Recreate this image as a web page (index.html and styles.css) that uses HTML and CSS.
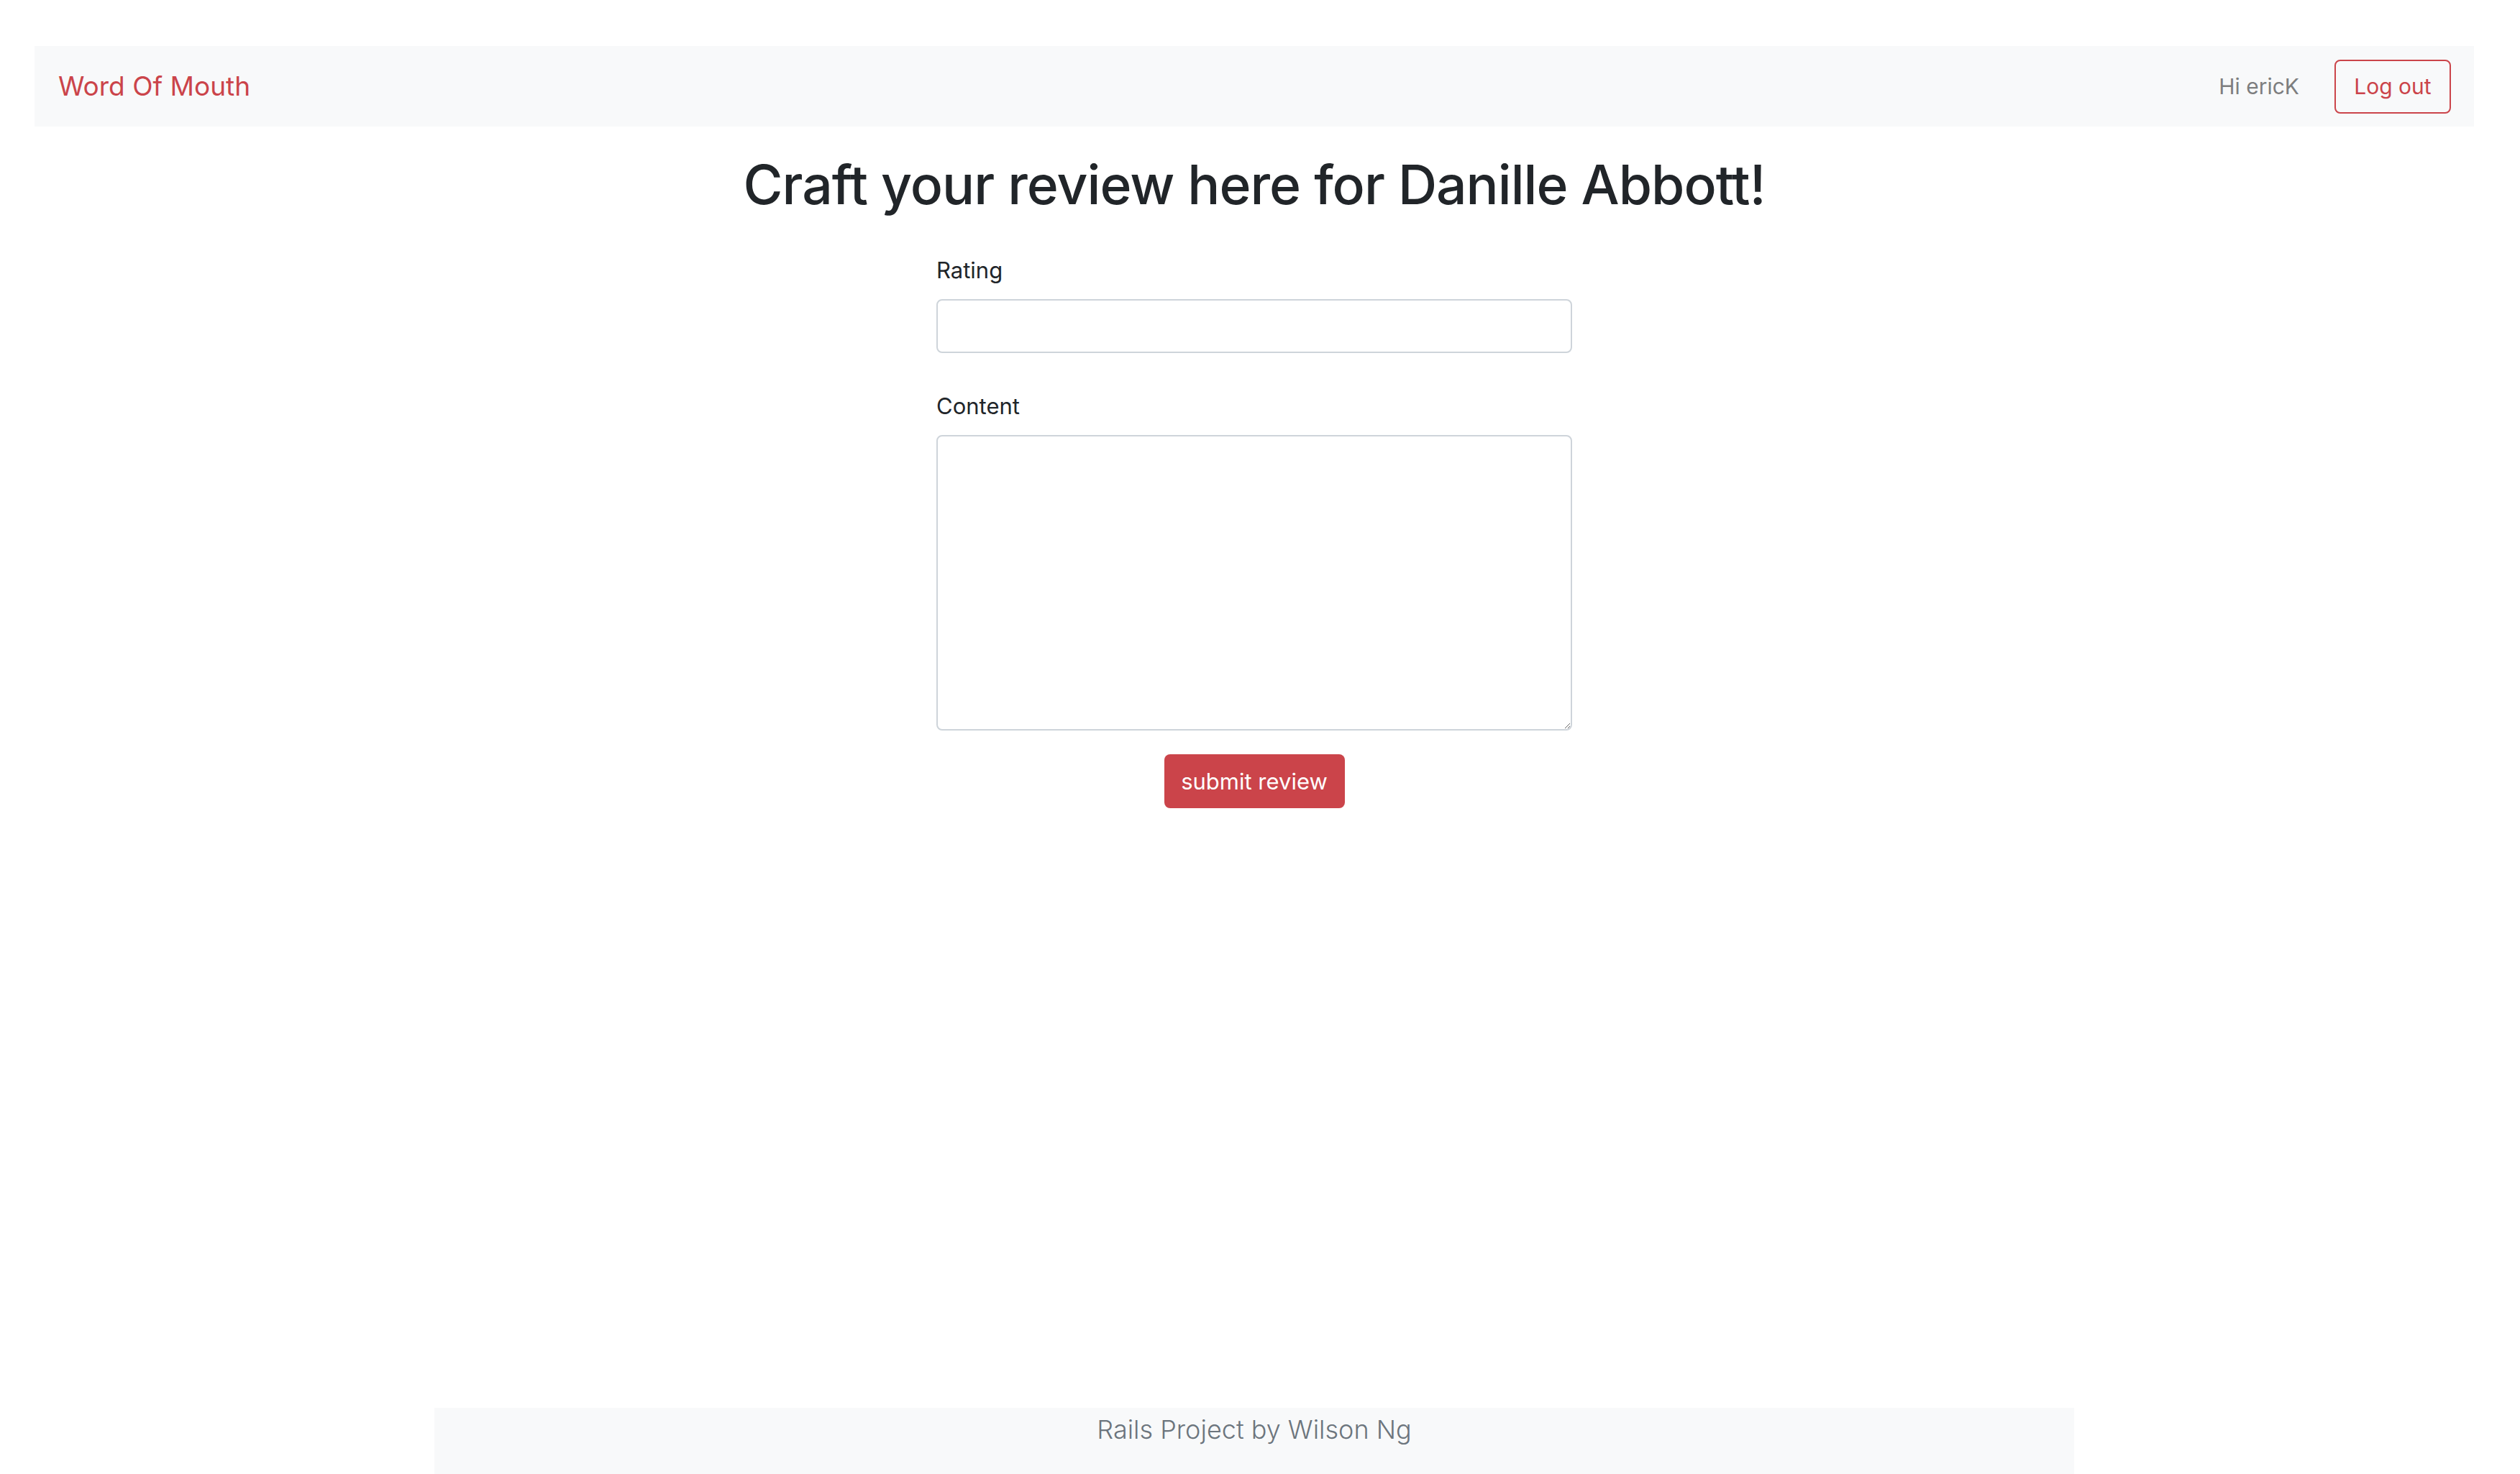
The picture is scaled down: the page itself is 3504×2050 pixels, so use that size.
FILE: index.html
```html
<!DOCTYPE html>
<html lang="en">
<head>
<meta charset="utf-8">
<title>Word Of Mouth</title>
<link rel="stylesheet" href="styles.css">
</head>
<body>
<div class="page">
  <nav class="navbar">
    <a class="brand" href="#">Word Of Mouth</a>
    <div class="nav-right">
      <span class="nav-text">Hi ericK</span>
      <button class="btn-outline" type="button">Log out</button>
    </div>
  </nav>
  <main class="main">
    <h1 class="title">Craft your review here for Danille Abbott!</h1>
    <form class="review-form">
      <div class="form-group">
        <label class="label" for="rating">Rating</label>
        <input class="input" id="rating" type="text">
      </div>
      <div class="form-group content-group">
        <label class="label" for="content">Content</label>
        <textarea class="textarea" id="content"></textarea>
      </div>
      <div class="actions">
        <button class="btn-danger" type="submit">submit review</button>
      </div>
    </form>
  </main>
  <footer class="footer">
    <p class="footer-text">Rails Project by Wilson Ng</p>
  </footer>
</div>
</body>
</html>
```
FILE: styles.css
```css
html, body {
  margin: 0;
  padding: 0;
  background: #ffffff;
}
* { box-sizing: border-box; }

body {
  font-family: Inter, "Liberation Sans", Arial, sans-serif;
  color: #212529;
}

.page {
  display: flex;
  flex-direction: column;
  height: 2050px;
  overflow: hidden;
  padding: 64px 64px 0 48px;
}

.navbar {
  height: 112px;
  background: #f8f9fa;
  display: flex;
  align-items: center;
  justify-content: space-between;
  padding: 0 32px 0 33px;
  flex-shrink: 0;
}

.brand {
  color: #cb444a;
  font-size: 37px;
  text-decoration: none;
  line-height: 1.5;
}

.nav-right {
  display: flex;
  align-items: center;
}

.nav-text {
  color: #7d7e7f;
  font-size: 30px;
  margin-right: 49px;
}

.btn-outline {
  font-family: inherit;
  height: 75px;
  width: 162px;
  font-size: 30px;
  color: #cb444a;
  background: transparent;
  border: 2px solid #cb444a;
  border-radius: 8px;
  padding: 0;
}

.main {
  display: flex;
  flex-direction: column;
  align-items: center;
}

.title {
  font-size: 75px;
  font-weight: 500;
  line-height: 1.2;
  margin: 36px 0 0 0;
  letter-spacing: -1px;
}

.review-form {
  width: 884px;
  margin-top: 50px;
}

.form-group {
  display: flex;
  flex-direction: column;
}

.label {
  font-size: 31px;
  line-height: 48px;
  margin-bottom: 16px;
}

.input {
  height: 75px;
  border: 2px solid #ced4da;
  border-radius: 8px;
  background: #fff;
}

.content-group {
  margin-top: 50px;
}

.textarea {
  height: 411px;
  border: 2px solid #ced4da;
  border-radius: 8px;
  background: #fff;
  resize: vertical;
}

.actions {
  display: flex;
  justify-content: center;
  margin-top: 33px;
}

.btn-danger {
  font-family: inherit;
  width: 251px;
  height: 75px;
  background: #cb444a;
  color: #ffffff;
  border: none;
  border-radius: 8px;
  font-size: 31px;
  padding: 0;
}

.footer {
  margin-top: auto;
  align-self: center;
  width: 2280px;
  height: 92px;
  background: #f8f9fa;
  flex-shrink: 0;
  display: flex;
  justify-content: center;
}

.footer-text {
  margin: 0;
  color: #6c757d;
  font-size: 36px;
  font-weight: 300;
  line-height: 60px;
}
```
